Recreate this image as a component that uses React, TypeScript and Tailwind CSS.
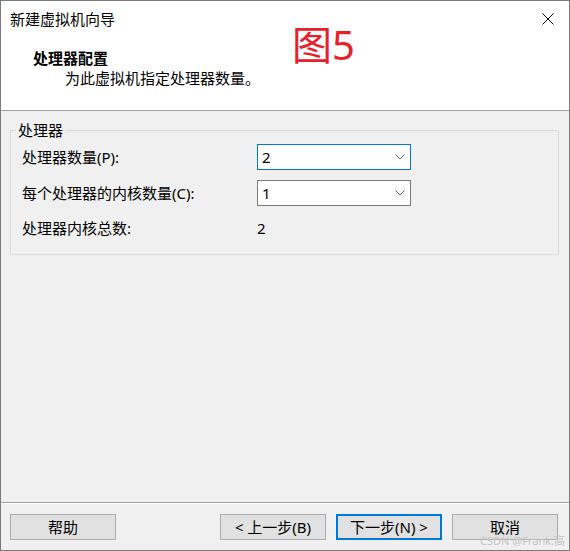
import React from 'react';

const font = { fontFamily: '"Noto Sans", "Noto Sans CJK SC", sans-serif' };

function Chevron() {
  return (
    <svg width="10" height="6" viewBox="0 0 10 6" className="shrink-0">
      <path d="M0.5 0.5 L5 5 L9.5 0.5" fill="none" stroke="#606060" strokeWidth="1" />
    </svg>
  );
}

function Select({ value, active }: { value: string; active?: boolean }) {
  return (
    <div
      className={`flex h-[26px] w-[154px] items-center justify-between bg-white pl-[4px] pr-[5px] border ${
        active ? 'border-[#0078d7]' : 'border-[#7a7a7a]'
      }`}
    >
      <span className="text-[15px] leading-[20px]">{value}</span>
      <Chevron />
    </div>
  );
}

function Button({ label, primary }: { label: string; primary?: boolean }) {
  return (
    <button
      className={`flex h-[26px] w-[106px] items-center justify-center bg-[#e1e1e1] text-[15px] leading-[20px] text-black ${
        primary ? 'border-2 border-[#0078d7]' : 'border border-[#adadad]'
      }`}
    >
      {label}
    </button>
  );
}

export default function App() {
  return (
    <div
      style={font}
      className="relative flex h-[551px] w-[570px] flex-col border border-[#7a7a7a] bg-[#f0f0f0] text-black"
    >
      {/* header */}
      <div className="h-[110px] shrink-0 border-b border-[#a0a0a0] bg-white">
        <div className="flex h-[20px] items-center justify-between pl-[9px] pr-[15px] mt-[8px]">
          <span className="text-[15px] leading-[20px]">新建虚拟机向导</span>
          <svg width="12" height="12" viewBox="0 0 12 12">
            <path d="M0.5 0.5 L11.5 11.5 M11.5 0.5 L0.5 11.5" stroke="#000" strokeWidth="1" />
          </svg>
        </div>
        <div className="mt-[19px] pl-[32px] text-[15px] font-bold leading-[20px]">处理器配置</div>
        <div className="pl-[64px] text-[15px] leading-[20px]">为此虚拟机指定处理器数量。</div>
      </div>

      {/* annotation */}
      <span className="absolute left-[291px] top-[24px] text-[40px] leading-[40px] text-[#e8202a]">图5</span>

      {/* body */}
      <div className="flex-1 pl-[9px] pr-[10px] pt-[9px]">
        <fieldset className="border border-[#dcdcdc] pb-[16px]">
          <legend className="ml-[5px] px-[2px] text-[15px] leading-[20px]">处理器</legend>
          <div className="grid grid-cols-[235px_154px] items-center gap-y-[10px] pl-[11px] pt-[4px]">
            <span className="text-[15px] leading-[20px]">处理器数量(P):</span>
            <Select value="2" active />
            <span className="text-[15px] leading-[20px]">每个处理器的内核数量(C):</span>
            <Select value="1" />
            <span className="mt-[2px] text-[15px] leading-[20px]">处理器内核总数:</span>
            <span className="mt-[2px] text-[15px] leading-[20px]">2</span>
          </div>
        </fieldset>
      </div>

      {/* footer */}
      <div className="shrink-0 border-t border-[#a0a0a0]">
        <div className="flex items-center justify-between border-t border-white pl-[9px] pr-[11px] py-[10px]">
          <Button label="帮助" />
          <div className="flex gap-[10px]">
            <Button label="< 上一步(B)" />
            <Button label="下一步(N) >" primary />
            <Button label="取消" />
          </div>
        </div>
      </div>

      <span className="absolute bottom-[3px] right-[4px] text-[11px] leading-[13px] text-[#c4c4c4]">
        CSDN @Frank.高
      </span>
    </div>
  );
}
